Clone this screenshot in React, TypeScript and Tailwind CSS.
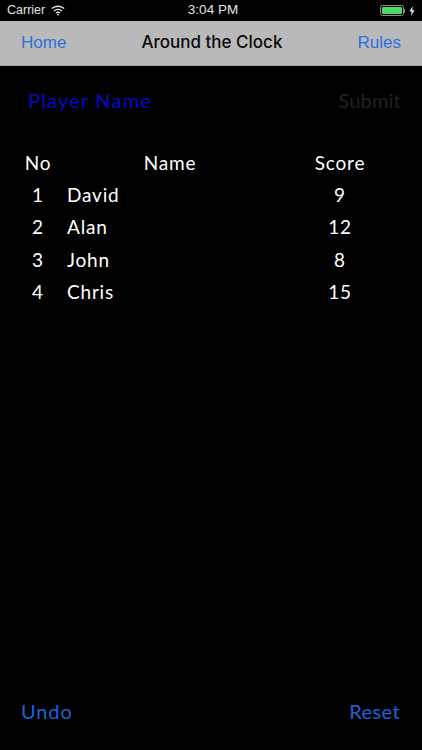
import React from 'react';

const hand = "font-['Lato',sans-serif]";

const players = [
  { no: 1, name: 'David', score: 9 },
  { no: 2, name: 'Alan', score: 12 },
  { no: 3, name: 'John', score: 8 },
  { no: 4, name: 'Chris', score: 15 },
];

const WifiIcon = () => (
  <svg width="14" height="11" viewBox="0 0 14 11" fill="none" stroke="#e8e8e8" strokeWidth="1.4">
    <path d="M0.8 3.6C4.3 0.4 9.7 0.4 13.2 3.6" />
    <path d="M3 5.9C5.2 3.9 8.8 3.9 11 5.9" />
    <path d="M5.1 8C6.2 7.1 7.8 7.1 8.9 8" />
    <path d="M7 10.8L5.9 9.4C6.5 8.9 7.5 8.9 8.1 9.4Z" fill="#e8e8e8" stroke="none" />
  </svg>
);

const Battery = () => (
  <div className="flex items-center gap-[4px]">
    <div className="flex items-center">
      <div className="w-[24px] h-[11px] rounded-[2.5px] border border-[#8a8a8a] p-[1px]">
        <div className="w-full h-full rounded-[1px] bg-[#4cd964]" />
      </div>
      <div className="w-[1px] h-[4px] bg-[#8a8a8a]" />
    </div>
    <svg width="6" height="10" viewBox="0 0 6 10" fill="#e8e8e8">
      <path d="M3.8 0L0.4 5.6H2.6L2 10L5.6 4.2H3.3Z" />
    </svg>
  </div>
);

export default function App() {
  return (
    <div className="w-[422px] h-[750px] bg-black flex flex-col font-['Liberation_Sans',sans-serif] overflow-hidden">
      {/* Status bar */}
      <div className="h-[21px] shrink-0 grid grid-cols-3 items-center pl-[7px] pr-[7px] text-[#e4e4e4] text-[12.5px]">
        <div className="flex items-center gap-[6px]">
          <span>Carrier</span>
          <WifiIcon />
        </div>
        <div className="text-center text-[13.5px] pl-[4px]">3:04 PM</div>
        <div className="flex justify-end">
          <Battery />
        </div>
      </div>

      {/* Nav bar */}
      <div className="h-[45px] shrink-0 bg-[#b9b9b9] border-b border-[#a4a4a4] flex items-center justify-between pl-[21px] pr-[21px] text-[17px]">
        <span className="text-[#2f6fe0]">Home</span>
        <span className="text-[#0a0a0a] font-medium font-['Inter',sans-serif] text-[17px]">Around the Clock</span>
        <span className="text-[#2f6fe0]">Rules</span>
      </div>

      {/* Player entry */}
      <div className={`flex items-center justify-between pl-[28px] pr-[21px] pt-[23px] ${hand}`}>
        <span className="text-[#0808c8] text-[20px] leading-[22px] tracking-[1.2px]">Player Name</span>
        <span className="text-[#222222] text-[20px] leading-[22px] tracking-[0.2px]">Submit</span>
      </div>

      {/* Scores */}
      <div className={`ml-[18px] w-[380px] mt-[36px] grid grid-cols-[40px_224px_116px] auto-rows-[32.3px] items-center text-white text-[19px] tracking-[0.8px] ${hand}`}>
        <div className="text-center">No</div>
        <div className="text-center">Name</div>
        <div className="text-center">Score</div>
        {players.map((p) => (
          <React.Fragment key={p.no}>
            <div className="text-center">{p.no}</div>
            <div className="pl-[9px]">{p.name}</div>
            <div className="text-center">{p.score}</div>
          </React.Fragment>
        ))}
      </div>

      {/* Bottom actions */}
      <div className={`mt-auto flex items-center justify-between pl-[21px] pr-[22px] pb-[28px] text-[#1f63d8] text-[20px] leading-[22px] tracking-[0.4px] ${hand}`}>
        <span className="tracking-[0.9px]">Undo</span>
        <span>Reset</span>
      </div>
    </div>
  );
}
